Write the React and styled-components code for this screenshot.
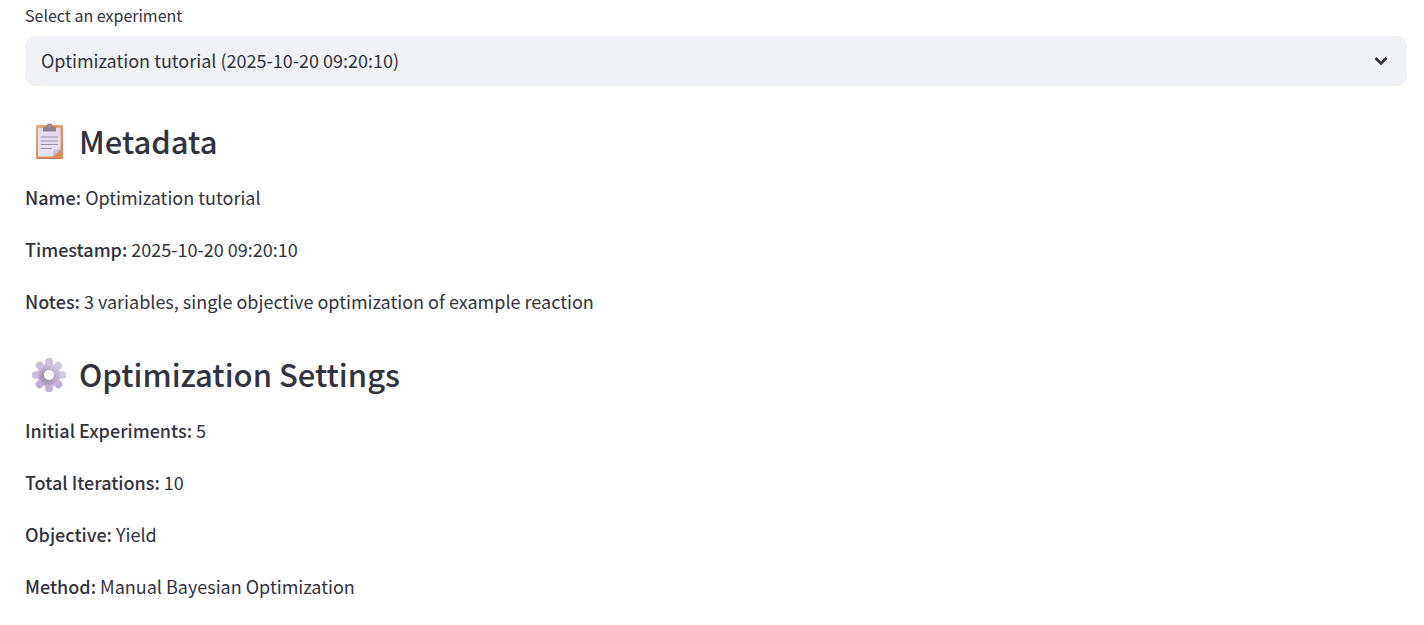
import React from "react";
import styled, { createGlobalStyle } from "styled-components";

const GlobalStyle = createGlobalStyle`
  *, *::before, *::after { box-sizing: border-box; }
  body {
    margin: 0;
    background: #ffffff;
    color: #31333f;
    font-family: "Source Sans Pro", "Noto Sans CJK SC", "Noto Sans", sans-serif;
    font-size: 18px;
    line-height: 32px;
  }
`;

const Page = styled.main`
  display: flex;
  flex-direction: column;
  gap: 35px;
  padding: 3px 17px 20px 25px;
`;

const Sections = styled.div`
  display: flex;
  flex-direction: column;
  gap: 37px;
`;

const Field = styled.div`
  display: flex;
  flex-direction: column;
  gap: 9px;
`;

const Label = styled.label`
  font-size: 16px;
  line-height: 24px;
`;

const SelectWrap = styled.div`
  display: grid;
  align-items: center;
`;

const Select = styled.select`
  grid-area: 1 / 1;
  width: 100%;
  height: 50px;
  padding: 0 48px 3px 16px;
  appearance: none;
  border: 0;
  border-radius: 10px;
  background: #f0f2f6;
  color: inherit;
  font: inherit;
`;

const Chevron = styled.svg`
  grid-area: 1 / 1;
  justify-self: end;
  width: 20px;
  height: 20px;
  margin-right: 16px;
  pointer-events: none;
`;

const Section = styled.section`
  display: flex;
  flex-direction: column;
  gap: 20px;
`;

const Heading = styled.h2`
  display: flex;
  align-items: center;
  gap: 8px;
  margin: 0;
  font-size: 31px;
  font-weight: 500;
  line-height: 40px;
`;

const Emoji = styled.svg`
  flex: none;
  width: 46px;
  height: 40px;
`;

const Entry = styled.p`
  margin: 0;
`;

const Name = styled.strong`
  font-weight: 500;
`;

function ClipboardIcon() {
  return (
    <Emoji viewBox="0 -1 46 40" aria-hidden="true">
      <defs>
        <linearGradient id="board" x1="0" y1="0" x2="0.6" y2="1">
          <stop offset="0" stopColor="#eca972" />
          <stop offset="1" stopColor="#d98b5a" />
        </linearGradient>
        <linearGradient id="sheet" x1="0" y1="0" x2="0" y2="1">
          <stop offset="0" stopColor="#e3daf0" />
          <stop offset="1" stopColor="#ebe3f5" />
        </linearGradient>
        <linearGradient id="fold" x1="0" y1="0" x2="1" y2="1">
          <stop offset="0" stopColor="#d9cbe8" />
          <stop offset="0.5" stopColor="#c4b4d2" />
        </linearGradient>
      </defs>
      <rect x="11" y="3" width="27" height="34" rx="1.5" fill="url(#board)" />
      <path d="M11 36h27a1.3 1.3 0 0 1-1.3 1H12.3a1.3 1.3 0 0 1-1.3-1z" fill="#c47c60" />
      <path d="M14 6h20.500a1 1 0 0 1 1 1v20.500l-7.500 7H14a1 1 0 0 1-1-1V7a1 1 0 0 1 1-1z" fill="url(#sheet)" />
      <path d="M28 34.500v-5.500a1.500 1.500 0 0 1 1.500-1.500h6z" fill="url(#fold)" />
      <path d="M18 9.500V6.500a2 2 0 0 1 2-2h1.500a3 3 0 0 1 6 0H29a2 2 0 0 1 2 2v3z" fill="#8e8190" />
      <circle cx="24.500" cy="4.300" r="1" fill="#d9a27d" />
      <path d="M16 15h16.500M16 19h16.500M16 22.500h16.500M16 26.500h10.500" stroke="#9a90a6" strokeWidth="1.1" strokeLinecap="round" fill="none" />
    </Emoji>
  );
}

const TEETH = [0, 45, 90, 135, 180, 225, 270, 315];

function GearIcon() {
  return (
    <Emoji viewBox="0 -1 46 40" aria-hidden="true">
      <defs>
        <linearGradient id="teeth" gradientUnits="userSpaceOnUse" x1="32" y1="4" x2="16" y2="36">
          <stop offset="0" stopColor="#d9cfe7" />
          <stop offset="1" stopColor="#bba9d5" />
        </linearGradient>
        <linearGradient id="ring" x1="0.9" y1="0.1" x2="0.2" y2="0.9">
          <stop offset="0" stopColor="#cfc4dc" />
          <stop offset="1" stopColor="#a598b8" />
        </linearGradient>
        <linearGradient id="inner" x1="0.9" y1="0.1" x2="0.2" y2="0.9">
          <stop offset="0" stopColor="#c2b7cf" />
          <stop offset="1" stopColor="#9a8cab" />
        </linearGradient>
        <mask id="hole" maskUnits="userSpaceOnUse" x="0" y="-1" width="46" height="40">
          <rect y="-1" width="46" height="40" fill="#fff" />
          <circle cx="24" cy="20" r="5" fill="#000" />
        </mask>
      </defs>
      <g mask="url(#hole)">
        {TEETH.map((angle) => (
          <path
            key={angle}
            fill={angle > 0 && angle < 135 ? "#d3c8e3" : angle >= 135 && angle < 270 ? "#bfaed8" : "#cabddd"}
            transform={`rotate(${angle} 24 20)`}
            d="M20 13L20.200 6.500Q20.200 3 23 3h2q2.800 0 2.800 3.500L28 13z"
          />
        ))}
        <circle cx="24" cy="20" r="11.500" fill="url(#teeth)" />
        <circle cx="24" cy="20" r="10" fill="url(#ring)" />
        <circle cx="24" cy="20" r="6.800" fill="url(#inner)" />
      </g>
    </Emoji>
  );
}

const sections = [
  {
    title: "Metadata",
    Icon: ClipboardIcon,
    entries: [
      ["Name:", "Optimization tutorial"],
      ["Timestamp:", "2025-10-20 09:20:10"],
      ["Notes:", "3 variables, single objective optimization of example reaction"],
    ],
  },
  {
    title: "Optimization Settings",
    Icon: GearIcon,
    entries: [
      ["Initial Experiments:", "5"],
      ["Total Iterations:", "10"],
      ["Objective:", "Yield"],
      ["Method:", "Manual Bayesian Optimization"],
    ],
  },
];

export default function App() {
  return (
    <>
      <GlobalStyle />
      <Page>
        <Field>
          <Label htmlFor="experiment">Select an experiment</Label>
          <SelectWrap>
            <Select id="experiment">
              <option>Optimization tutorial (2025-10-20 09:20:10)</option>
            </Select>
            <Chevron viewBox="0 0 20 20" aria-hidden="true">
              <path d="M4.500 7L10 12.500l5.500-5.500" fill="none" stroke="#31333f" strokeWidth="2.500" />
            </Chevron>
          </SelectWrap>
        </Field>
        <Sections>
          {sections.map(({ title, Icon, entries }) => (
            <Section key={title}>
              <Heading>
                <Icon />
                {title}
              </Heading>
              {entries.map(([name, value]) => (
                <Entry key={name}>
                  <Name>{name}</Name> {value}
                </Entry>
              ))}
            </Section>
          ))}
        </Sections>
      </Page>
    </>
  );
}
